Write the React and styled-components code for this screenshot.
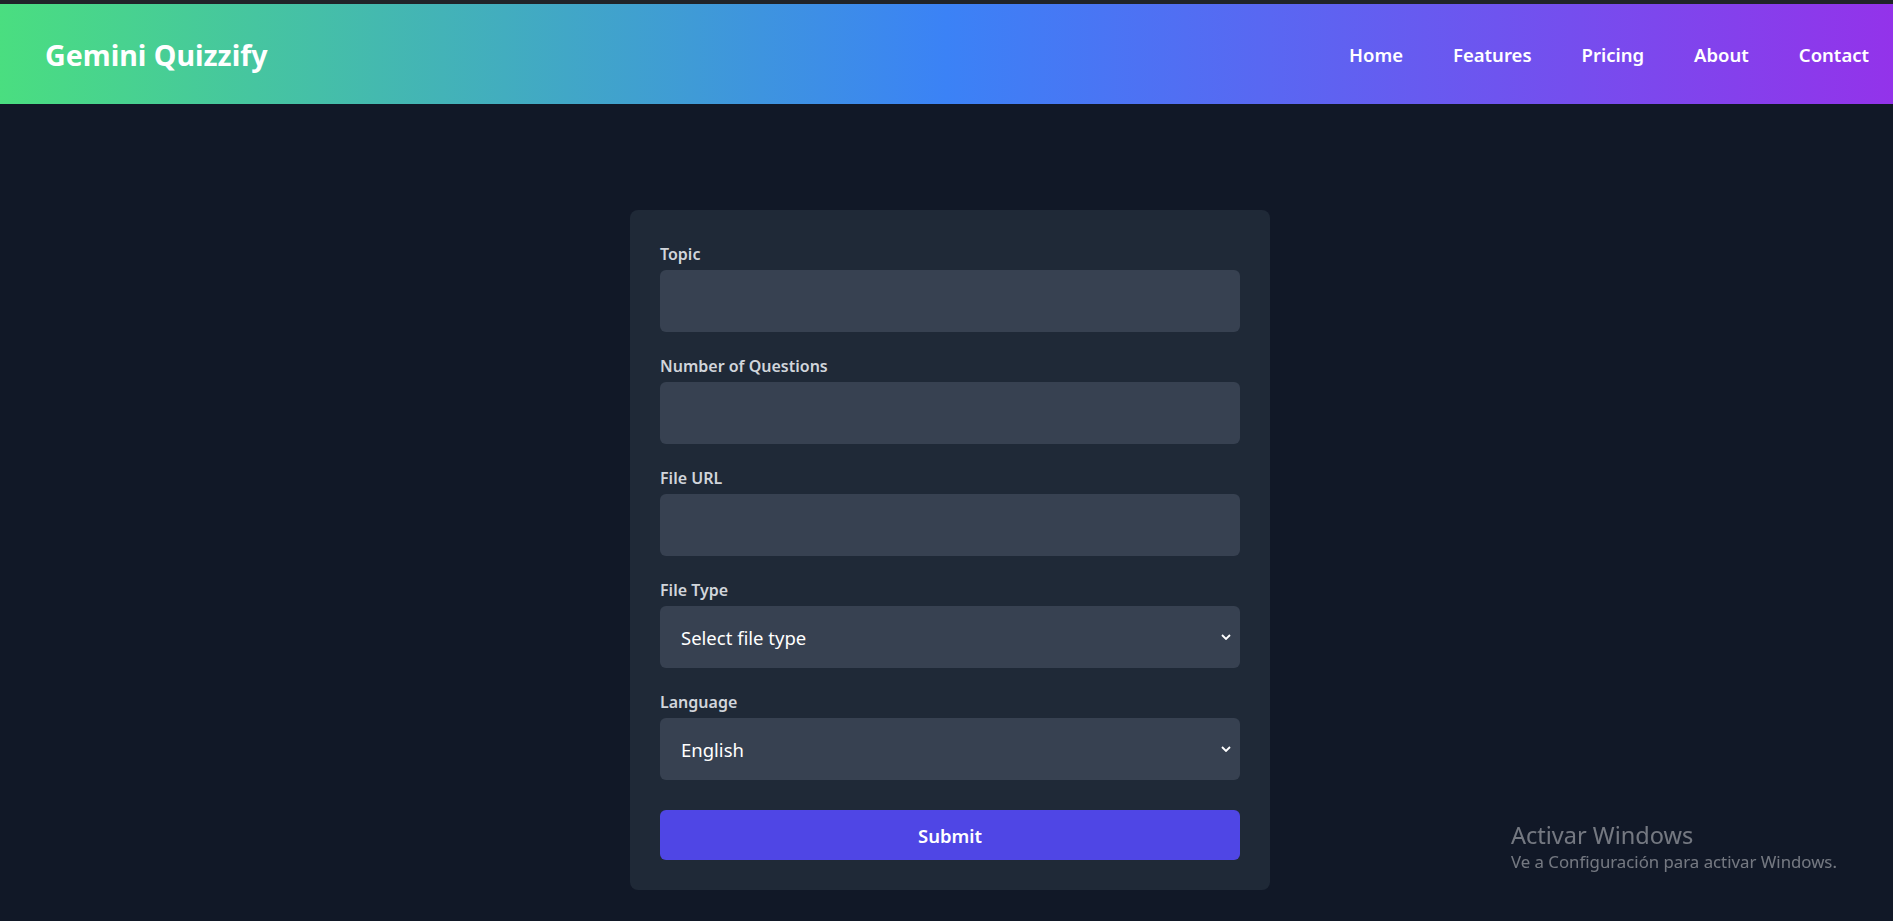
import styled, { createGlobalStyle } from "styled-components";

const GlobalStyle = createGlobalStyle`
  body {
    margin: 0;
    background: #111827;
    font-family: "Noto Sans", "Open Sans", sans-serif;
  }
`;

const App = () => {
  return (
    <>
      <GlobalStyle />
      <Page>
        <Header>
          <Logo>Gemini Quizzify</Logo>
          <Nav>
            <NavLink href="#">Home</NavLink>
            <NavLink href="#">Features</NavLink>
            <NavLink href="#">Pricing</NavLink>
            <NavLink href="#">About</NavLink>
            <NavLink href="#">Contact</NavLink>
          </Nav>
        </Header>
        <Main>
          <Card onSubmit={(e) => e.preventDefault()}>
            <Field>
              <Label>Topic</Label>
              <Input type="text" />
            </Field>
            <Field>
              <Label>Number of Questions</Label>
              <Input type="number" />
            </Field>
            <Field>
              <Label>File URL</Label>
              <Input type="text" />
            </Field>
            <Field>
              <Label>File Type</Label>
              <SelectWrap>
                <Select defaultValue="">
                  <option value="">Select file type</option>
                  <option value="pdf">PDF</option>
                  <option value="txt">Text</option>
                </Select>
                <Chevron viewBox="0 0 10 6">
                  <path d="M1 1l4 4 4-4" />
                </Chevron>
              </SelectWrap>
            </Field>
            <Field>
              <Label>Language</Label>
              <SelectWrap>
                <Select defaultValue="en">
                  <option value="en">English</option>
                  <option value="es">Spanish</option>
                </Select>
                <Chevron viewBox="0 0 10 6">
                  <path d="M1 1l4 4 4-4" />
                </Chevron>
              </SelectWrap>
            </Field>
            <Button type="submit">Submit</Button>
          </Card>
        </Main>
        <Watermark>
          <WatermarkTitle>Activar Windows</WatermarkTitle>
          <WatermarkText>Ve a Configuración para activar Windows.</WatermarkText>
        </Watermark>
      </Page>
    </>
  );
};

const Page = styled.div`
  min-height: 100vh;
  background: #111827;
`;

const Header = styled.header`
  height: 100px;
  border-top: 4px solid #202429;
  display: flex;
  align-items: center;
  justify-content: space-between;
  padding: 0 24px 0 45px;
  background: linear-gradient(to right, #4ade80, #3b82f6, #9333ea);
`;

const Logo = styled.div`
  color: #fff;
  font-size: 28.6px;
  font-weight: 700;
`;

const Nav = styled.nav`
  display: flex;
  gap: 50px;
`;

const NavLink = styled.a`
  color: #fff;
  font-size: 18.5px;
  font-weight: 600;
  text-decoration: none;
`;

const Main = styled.main`
  display: flex;
  justify-content: center;
  padding: 106px 0 0 7px;
`;

const Card = styled.form`
  width: 640px;
  box-sizing: border-box;
  padding: 30px;
  background: #1f2937;
  border-radius: 8px;
  display: flex;
  flex-direction: column;
`;

const Field = styled.div`
  display: flex;
  flex-direction: column;
  margin-bottom: 20px;
`;

const Label = styled.label`
  color: #d1d5db;
  font-size: 16px;
  font-weight: 600;
  line-height: 24px;
  padding-top: 2px;
  margin-bottom: 4px;
`;

const Input = styled.input`
  height: 62px;
  box-sizing: border-box;
  border: none;
  border-radius: 6px;
  background: #374151;
  color: #fff;
  font-family: inherit;
  font-size: 18.5px;
  padding: 0 21px;
  outline: none;
  appearance: textfield;
  &::-webkit-inner-spin-button {
    appearance: none;
  }
`;

const SelectWrap = styled.div`
  position: relative;
`;

const Select = styled.select`
  width: 100%;
  height: 62px;
  box-sizing: border-box;
  border: none;
  border-radius: 6px;
  background: #374151;
  color: #fff;
  font-family: inherit;
  font-size: 18.5px;
  padding: 0 21px;
  outline: none;
  appearance: none;
`;

const Chevron = styled.svg`
  position: absolute;
  right: 9px;
  top: 50%;
  width: 10px;
  height: 6px;
  margin-top: -3px;
  fill: none;
  stroke: #fff;
  stroke-width: 1.8;
  pointer-events: none;
`;

const Button = styled.button`
  margin-top: 10px;
  height: 50px;
  border: none;
  border-radius: 6px;
  background: #4f46e5;
  color: #fff;
  font-family: inherit;
  font-size: 18.5px;
  font-weight: 600;
  cursor: pointer;
`;

const Watermark = styled.div`
  position: fixed;
  left: 1511px;
  top: 819px;
  display: flex;
  flex-direction: column;
  color: rgba(255, 255, 255, 0.42);
`;

const WatermarkTitle = styled.div`
  font-size: 23.5px;
  line-height: 32px;
`;

const WatermarkText = styled.div`
  font-size: 16.8px;
  line-height: 22px;
`;

export default App;
